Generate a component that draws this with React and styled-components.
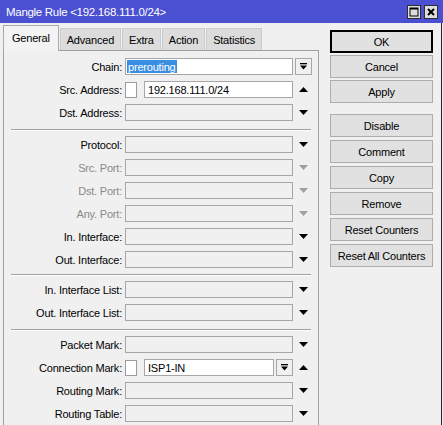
import styled, { createGlobalStyle } from "styled-components";

const GlobalStyle = createGlobalStyle`
  html, body {
    margin: 0;
    padding: 0;
    background: #f0f0f0;
  }
  body {
    font-family: "Liberation Sans", Arial, sans-serif;
    font-size: 11px;
    letter-spacing: -0.2px;
    color: #000;
  }
`;

const groups = [
  {
    pad: "4px 0 5px",
    rows: [
      { label: "Chain", value: "prerouting", selected: true, combo: true },
      { label: "Src. Address", value: "192.168.111.0/24", negate: true, arrow: "up" },
      { label: "Dst. Address" },
    ],
  },
  {
    pad: "2px 0 3px",
    rows: [
      { label: "Protocol" },
      { label: "Src. Port", disabled: true },
      { label: "Dst. Port", disabled: true },
      { label: "Any. Port", disabled: true },
      { label: "In. Interface" },
      { label: "Out. Interface" },
    ],
  },
  {
    pad: "2px 0 5px",
    rows: [{ label: "In. Interface List" }, { label: "Out. Interface List" }],
  },
  {
    pad: "2px 0 5px",
    rows: [
      { label: "Packet Mark" },
      { label: "Connection Mark", value: "ISP1-IN", negate: true, inner: true, arrow: "up" },
      { label: "Routing Mark" },
      { label: "Routing Table" },
    ],
  },
];

const tabs = ["General", "Advanced", "Extra", "Action", "Statistics"];
const topButtons = ["OK", "Cancel", "Apply"];
const bottomButtons = ["Disable", "Comment", "Copy", "Remove", "Reset Counters", "Reset All Counters"];

const Window = styled.div`
  width: 443px;
  height: 425px;
  display: flex;
  flex-direction: column;
  overflow: hidden;
  background: #f0f0f0;
`;

const TitleBar = styled.div`
  height: 23px;
  flex: none;
  display: flex;
  align-items: center;
  justify-content: space-between;
  padding: 0 5px 0 6px;
  background: #4b4fd1;
  color: #fff;
  font-size: 11.5px;
  letter-spacing: -0.3px;
`;

const TitleButtons = styled.div`
  display: flex;
  gap: 3px;
  margin-top: 1px;
`;

const TitleButton = styled.div`
  width: 14px;
  height: 14px;
  box-sizing: border-box;
  border: 1px solid #2e2e2e;
  background: #dedede;
  display: flex;
  align-items: center;
  justify-content: center;
`;

const Body = styled.div`
  flex: 1;
  display: flex;
  min-height: 0;
  padding-top: 2px;
  border-right: 1px solid #262626;
  margin-right: 1px;
`;

const TabArea = styled.div`
  width: 316px;
  margin-left: 3px;
  display: flex;
  flex-direction: column;
`;

const TabStrip = styled.div`
  height: 25px;
  display: flex;
  align-items: flex-end;
  gap: 1px;
`;

const Tab = styled.div`
  box-sizing: border-box;
  height: ${(p) => (p.$active ? "26px" : "22px")};
  margin-bottom: ${(p) => (p.$active ? "-1px" : "0")};
  padding: ${(p) => (p.$active ? "0 8px 1px" : "0 6px")};
  display: flex;
  align-items: center;
  position: relative;
  z-index: ${(p) => (p.$active ? 1 : 0)};
  background: ${(p) => (p.$active ? "#f3f3f3" : "#dcdcdc")};
  border: 1px solid ${(p) => (p.$active ? "#a9a9a9" : "#cbcbcb")};
  border-bottom: none;
`;

const Panel = styled.div`
  flex: 1;
  border: 1px solid #a0a0a0;
  border-bottom: none;
  background: #f0f0f0;
`;

const Group = styled.div`
  padding: ${(p) => p.$pad};
`;

const Separator = styled.div`
  margin: 0 7px;
  border-top: 1px solid #a0a0a0;
  border-bottom: 1px solid #ffffff;
`;

const Row = styled.div`
  height: 23px;
  display: flex;
  align-items: center;
`;

const Label = styled.div`
  width: 118px;
  text-align: right;
  white-space: nowrap;
  color: ${(p) => (p.$disabled ? "#8a8a8a" : "#000")};
`;

const FieldArea = styled.div`
  width: 168px;
  margin-left: 3px;
  display: flex;
  align-items: center;
  gap: 2px;
`;

const Check = styled.div`
  width: 12px;
  height: 16px;
  box-sizing: border-box;
  border: 1px solid #9c9c9c;
  background: #fff;
  margin-right: 5px;
  flex: none;
`;

const Field = styled.div`
  flex: 1;
  height: 17px;
  box-sizing: border-box;
  border: 1px solid #a6a6a6;
  background: ${(p) => (p.$filled ? "#fff" : "transparent")};
  padding: 1px;
  display: flex;
  align-items: center;
  overflow: hidden;
  white-space: nowrap;
`;

const Value = styled.span`
  padding-left: 2px;
`;

const Selected = styled.span`
  align-self: stretch;
  display: flex;
  align-items: center;
  padding: 0 1px;
  background: #3a8ee2;
  color: #fff;
`;

const DropButton = styled.div`
  width: 17px;
  height: 17px;
  flex: none;
  box-sizing: border-box;
  border: 1px solid #a6a6a6;
  background: #f0f0f0;
  display: flex;
  align-items: center;
  justify-content: center;
`;

const ArrowSlot = styled.div`
  width: 18px;
  margin-left: 1px;
  display: flex;
  align-items: center;
  justify-content: center;
`;

const ButtonColumn = styled.div`
  width: 103px;
  margin-left: 11px;
  padding-top: 5px;
  display: flex;
  flex-direction: column;
`;

const ButtonGroup = styled.div`
  display: flex;
  flex-direction: column;
  gap: ${(p) => p.$gap}px;
  margin-top: ${(p) => p.$offset || 0}px;
`;

const Button = styled.div`
  height: 23px;
  box-sizing: border-box;
  display: flex;
  align-items: center;
  justify-content: center;
  background: #e1e1e1;
  border: 1px solid ${(p) => (p.$default ? "#000" : "#adadad")};
  box-shadow: ${(p) => (p.$default ? "inset 0 0 0 1px #000" : "none")};
  white-space: nowrap;
`;

const Arrow = ({ dir = "down", disabled }) => (
  <svg width="9" height="5" viewBox="0 0 9 5">
    <polygon
      points={dir === "up" ? "0,5 9,5 4.5,0" : "0,0 9,0 4.5,5"}
      fill={disabled ? "#a0a0a0" : "#000"}
    />
  </svg>
);

const DropIcon = () => (
  <svg width="7" height="7" viewBox="0 0 7 7">
    <rect x="0" y="0" width="7" height="1.3" fill="#000" />
    <polygon points="0,2.5 7,2.5 3.5,6.5" fill="#000" />
  </svg>
);

const FieldRow = ({ row }) => (
  <Row>
    <Label $disabled={row.disabled}>{row.label}:</Label>
    <FieldArea>
      {row.negate && <Check />}
      <Field $filled={!!row.value}>
        {row.selected ? <Selected>{row.value}</Selected> : row.value && <Value>{row.value}</Value>}
      </Field>
      {row.inner && (
        <DropButton>
          <DropIcon />
        </DropButton>
      )}
    </FieldArea>
    <ArrowSlot>
      {row.combo ? (
        <DropButton>
          <DropIcon />
        </DropButton>
      ) : (
        <Arrow dir={row.arrow} disabled={row.disabled} />
      )}
    </ArrowSlot>
  </Row>
);

export default function App() {
  return (
    <>
      <GlobalStyle />
      <Window>
        <TitleBar>
          <span>Mangle Rule &lt;192.168.111.0/24&gt;</span>
          <TitleButtons>
            <TitleButton>
              <svg width="10" height="10" viewBox="0 0 10 10">
                <rect x="1" y="1" width="8" height="8" fill="none" stroke="#000" strokeWidth="1" />
                <rect x="1" y="1" width="8" height="1.5" fill="#000" />
              </svg>
            </TitleButton>
            <TitleButton>
              <svg width="10" height="10" viewBox="0 0 10 10">
                <path d="M2 2 L8 8 M8 2 L2 8" stroke="#000" strokeWidth="2" />
              </svg>
            </TitleButton>
          </TitleButtons>
        </TitleBar>
        <Body>
          <TabArea>
            <TabStrip>
              {tabs.map((t, i) => (
                <Tab key={t} $active={i === 0}>
                  {t}
                </Tab>
              ))}
            </TabStrip>
            <Panel>
              {groups.map((g, gi) => (
                <div key={gi}>
                  {gi > 0 && <Separator />}
                  <Group $pad={g.pad}>
                    {g.rows.map((row) => (
                      <FieldRow key={row.label} row={row} />
                    ))}
                  </Group>
                </div>
              ))}
            </Panel>
          </TabArea>
          <ButtonColumn>
            <ButtonGroup $gap={2}>
              {topButtons.map((b, i) => (
                <Button key={b} $default={i === 0}>
                  {b}
                </Button>
              ))}
            </ButtonGroup>
            <ButtonGroup $gap={3} $offset={11}>
              {bottomButtons.map((b) => (
                <Button key={b}>{b}</Button>
              ))}
            </ButtonGroup>
          </ButtonColumn>
        </Body>
      </Window>
    </>
  );
}
